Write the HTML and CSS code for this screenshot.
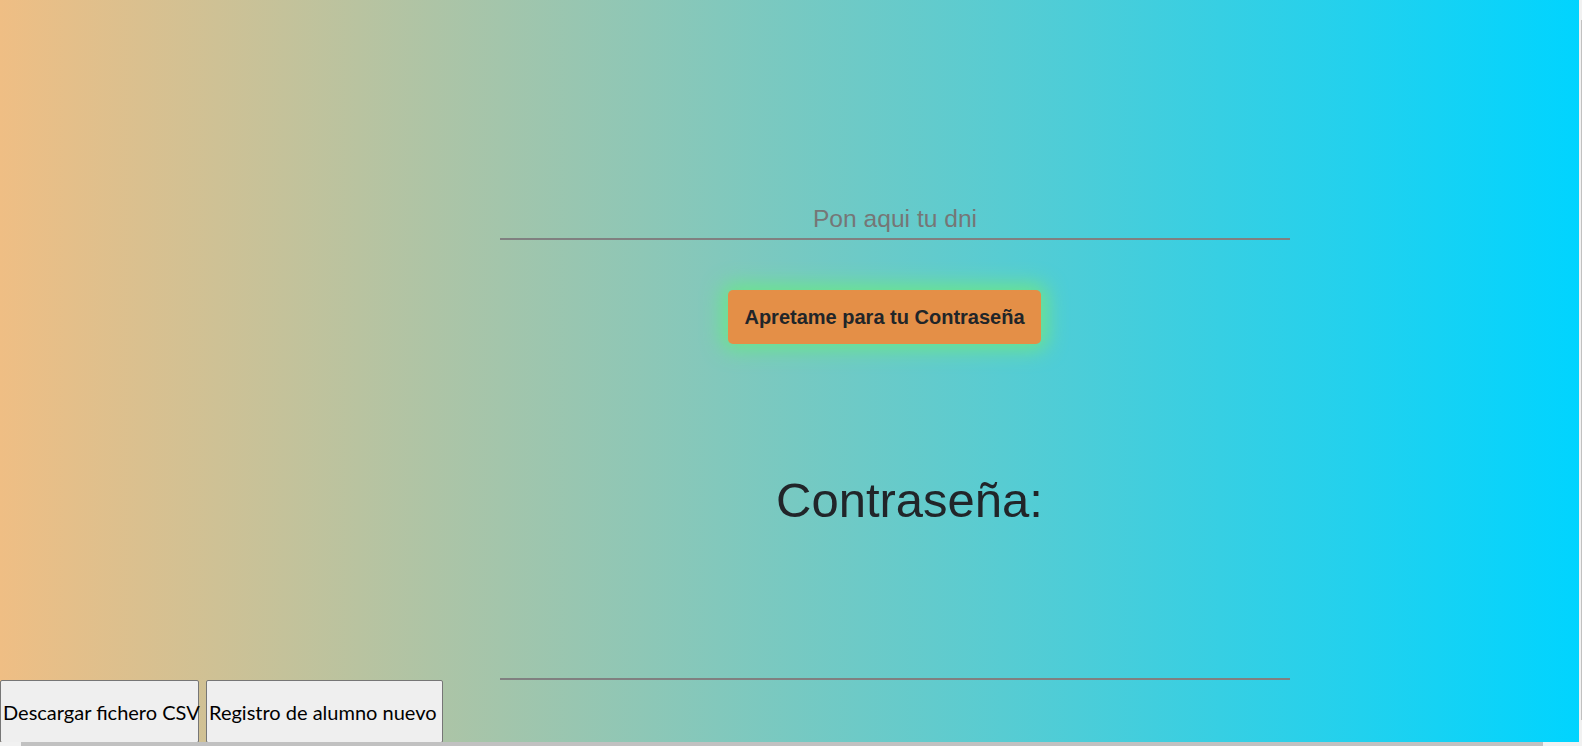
FILE: index.html
```html
<!DOCTYPE html>
<html lang="es">
<head>
<meta charset="utf-8">
<title>Contraseña</title>
<link rel="stylesheet" href="styles.css">
</head>
<body>
<div class="viewport">
  <div class="page">
    <div class="form">
      <input class="field" type="text" placeholder="Pon aqui tu dni">
      <button class="pass-btn" type="button">Apretame para tu Contraseña</button>
      <h1 class="title">Contraseña:</h1>
      <input class="field field-out" type="text">
    </div>
    <div class="actions">
      <button class="sys-btn btn-csv" type="button">Descargar fichero CSV</button>
      <button class="sys-btn btn-reg" type="button">Registro de alumno nuevo</button>
    </div>
  </div>
  <div class="vscroll"><div class="vthumb"></div></div>
</div>
<div class="hscroll"><div class="hthumb"></div></div>
</body>
</html>
```

FILE: styles.css
```css
html, body {
  margin: 0;
  padding: 0;
  height: 746px;
  overflow: hidden;
}
body {
  display: flex;
  flex-direction: column;
  font-family: "Liberation Sans", Arial, sans-serif;
  background: #f1f1f1;
}
.viewport {
  display: flex;
  height: 742px;
}
.page {
  flex: 1;
  display: flex;
  flex-direction: column;
  overflow: hidden;
  background: linear-gradient(90deg, #efbe84 0%, #00d4ff 100%);
}
.vscroll {
  width: 3px;
  background: #f1f1f1;
  display: flex;
  flex-direction: column;
  align-items: flex-end;
  padding-top: 20px;
}
.vthumb {
  width: 1px;
  height: 700px;
  background: #c1c1c1;
}
.hscroll {
  height: 4px;
  background: #f1f1f1;
  display: flex;
  padding-left: 21px;
}
.hthumb {
  width: 1522px;
  height: 4px;
  background: #c1c1c1;
}
.form {
  width: 790px;
  margin-left: 500px;
  padding-top: 200px;
  display: flex;
  flex-direction: column;
  align-items: flex-start;
}
.field {
  box-sizing: border-box;
  width: 790px;
  height: 40px;
  margin: 0;
  padding: 0;
  border: none;
  border-bottom: 2px solid #808080;
  background: transparent;
  font-family: "Liberation Sans", Arial, sans-serif;
  font-size: 24.6px;
  text-align: center;
  color: #212529;
  outline: none;
}
.field::placeholder {
  color: #767676;
}
.pass-btn {
  margin: 50px 0 0 228px;
  width: 313px;
  height: 54px;
  padding: 0;
  border: none;
  border-radius: 5px;
  background: #e48f47;
  color: #212529;
  font-family: "Liberation Sans", Arial, sans-serif;
  font-weight: bold;
  font-size: 20px;
  box-shadow: 0 0 20px 6px rgba(108, 228, 140, 1);
}
.title {
  margin: 128px 0 0 276px;
  font-size: 49px;
  font-weight: normal;
  line-height: 56px;
  color: #212529;
}
.field-out {
  margin-top: 112px;
}
.actions {
  display: flex;
  gap: 7px;
  margin-top: 0;
}
.sys-btn {
  box-sizing: border-box;
  height: 63px;
  margin: 0;
  padding: 0 2px;
  border: 1px solid #767676;
  border-radius: 2px;
  background: #efefef;
  color: #000;
  font-family: Lato, "Open Sans", sans-serif;
  font-size: 20px;
  white-space: nowrap;
  text-align: left;
}
.btn-csv {
  width: 199px;
}
.btn-reg {
  width: 237px;
}
```
